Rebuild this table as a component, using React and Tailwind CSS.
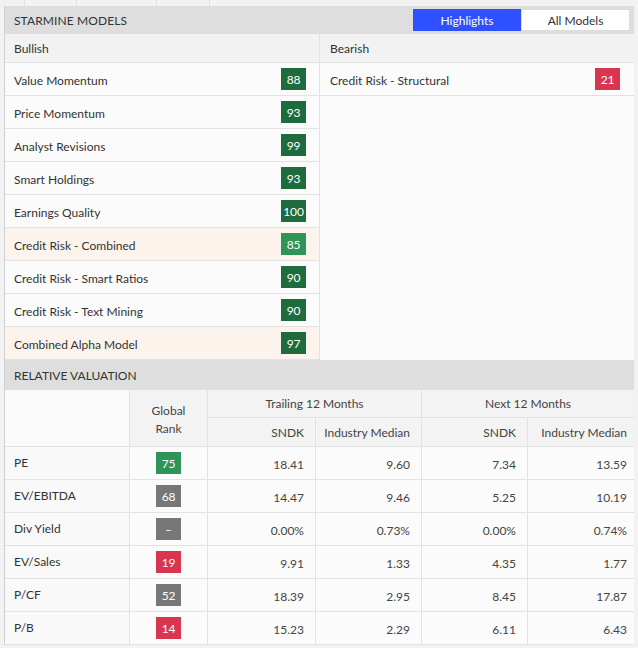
import React from "react";

const bullish = [
  { name: "Value Momentum", v: "88", c: "bg-[#1e6b3e]" },
  { name: "Price Momentum", v: "93", c: "bg-[#1e6b3e]" },
  { name: "Analyst Revisions", v: "99", c: "bg-[#1e6b3e]" },
  { name: "Smart Holdings", v: "93", c: "bg-[#1e6b3e]" },
  { name: "Earnings Quality", v: "100", c: "bg-[#1e6b3e]" },
  { name: "Credit Risk - Combined", v: "85", c: "bg-[#2e9457]", hl: true },
  { name: "Credit Risk - Smart Ratios", v: "90", c: "bg-[#1e6b3e]" },
  { name: "Credit Risk - Text Mining", v: "90", c: "bg-[#1e6b3e]" },
  { name: "Combined Alpha Model", v: "97", c: "bg-[#1e6b3e]", hl: true },
];

const vals = [
  { n: "PE", r: "75", c: "bg-[#2e9457]", a: "18.41", b: "9.60", d: "7.34", e: "13.59" },
  { n: "EV/EBITDA", r: "68", c: "bg-[#777777]", a: "14.47", b: "9.46", d: "5.25", e: "10.19" },
  { n: "Div Yield", r: "--", c: "bg-[#777777]", a: "0.00%", b: "0.73%", d: "0.00%", e: "0.74%" },
  { n: "EV/Sales", r: "19", c: "bg-[#d8354f]", a: "9.91", b: "1.33", d: "4.35", e: "1.77" },
  { n: "P/CF", r: "52", c: "bg-[#777777]", a: "18.39", b: "2.95", d: "8.45", e: "17.87" },
  { n: "P/B", r: "14", c: "bg-[#d8354f]", a: "15.23", b: "2.29", d: "6.11", e: "6.43" },
];

function Badge({ v, c }) {
  return (
    <span className={`${c} text-white text-[12px] h-[22px] w-[25px] flex items-center justify-center tracking-[-0.2px] pt-[1px]`}>
      {v === "--" ? "–" : v}
    </span>
  );
}

const num = "h-[33px] border-b border-[#e2e2e2] flex items-center justify-end pt-[3px] text-[#444]";

export default function App() {
  return (
    <div className="w-[638px] h-[648px] bg-[#f2f2f2] text-[#333] text-[12px] overflow-hidden" style={{ fontFamily: "Lato, 'Open Sans', sans-serif" }}>
      <div className="h-[6px] flex">
        <div className="w-[25px] border-r border-[#e2e2e2]" />
        <div className="w-[52px] border-r border-[#e2e2e2]" />
        <div className="w-[80px] border-r border-[#e2e2e2]" />
        <div className="w-[53px] border-r border-[#e2e2e2]" />
      </div>
      <div className="ml-[4px] w-[630px] border-l border-[#d0d0d0] bg-[#fafafa]">
        <div className="h-[28px] bg-[#dedede] flex items-center justify-between pl-[9px] pr-[4px]">
          <span className="text-[12px] tracking-[0.1px] pt-[2px]">STARMINE MODELS</span>
          <div className="flex h-[22px]">
            <div className="w-[108px] bg-[#2f50ff] text-white flex items-center justify-center pt-[1px]">Highlights</div>
            <div className="w-[109px] bg-white border border-[#dcdcdc] flex items-center justify-center pt-[1px]">All Models</div>
          </div>
        </div>
        <div className="flex">
          <div className="w-[315px] border-r border-[#e2e2e2]">
            <div className="h-[29px] bg-[#f2f2f2] border-b border-[#e2e2e2] flex items-center pl-[9px] pt-[2px]">Bullish</div>
            {bullish.map((r) => (
              <div key={r.name} className={`h-[33px] border-b border-[#e2e2e2] flex items-center justify-between pl-[9px] pr-[13px] ${r.hl ? "bg-[#fcf3ec]" : "bg-[#fbfbfb]"}`}>
                <span className="pt-[3px]">{r.name}</span>
                <Badge v={r.v} c={r.c} />
              </div>
            ))}
          </div>
          <div className="flex-1">
            <div className="h-[29px] bg-[#f2f2f2] border-b border-[#e2e2e2] flex items-center pl-[10px] pt-[2px]">Bearish</div>
            <div className="h-[33px] border-b border-[#e2e2e2] bg-[#fbfbfb] flex items-center justify-between pl-[10px] pr-[14px]">
              <span className="pt-[3px]">Credit Risk - Structural</span>
              <Badge v="21" c="bg-[#d8354f]" />
            </div>
          </div>
        </div>
        <div className="h-[30px] bg-[#dedede] flex items-center pl-[9px] pt-[2px]">RELATIVE VALUATION</div>
        <div className="grid grid-cols-[125px_78px_108px_106px_106px_1fr] bg-[#fbfbfb]">
          <div className="row-span-2 bg-[#fbfbfb] border-r border-b border-[#e2e2e2]" />
          <div className="row-span-2 bg-[#f3f3f3] border-r border-b border-[#e2e2e2] flex flex-col items-center justify-center leading-[18px] text-[#444] pt-[3px]">
            <span>Global</span>
            <span>Rank</span>
          </div>
          <div className="col-span-2 h-[28px] bg-[#f3f3f3] border-r border-b border-[#e2e2e2] flex items-center justify-center text-[#444] pt-[1px]">Trailing 12 Months</div>
          <div className="col-span-2 h-[28px] bg-[#f3f3f3] border-b border-[#e2e2e2] flex items-center justify-center text-[#444] pt-[1px]">Next 12 Months</div>
          <div className="h-[29px] bg-[#f3f3f3] border-r border-b border-[#e2e2e2] flex items-center justify-end pr-[11px] text-[#444] pt-[2px]">SNDK</div>
          <div className="h-[29px] bg-[#f3f3f3] border-r border-b border-[#e2e2e2] flex items-center justify-end pr-[11px] text-[#444] pt-[2px]">Industry Median</div>
          <div className="h-[29px] bg-[#f3f3f3] border-r border-b border-[#e2e2e2] flex items-center justify-end pr-[11px] text-[#444] pt-[2px]">SNDK</div>
          <div className="h-[29px] bg-[#f3f3f3] border-b border-[#e2e2e2] flex items-center justify-end pr-[7px] text-[#444] pt-[2px]">Industry Median</div>
          {vals.map((r) => (
            <React.Fragment key={r.n}>
              <div className="h-[33px] border-r border-b border-[#e2e2e2] bg-[#f9f9f9] pl-[9px] pt-[7px]">{r.n}</div>
              <div className="h-[33px] border-r border-b border-[#e2e2e2] flex items-center justify-center"><Badge v={r.r} c={r.c} /></div>
              <div className={`${num} border-r pr-[11px]`}>{r.a}</div>
              <div className={`${num} border-r pr-[11px]`}>{r.b}</div>
              <div className={`${num} border-r pr-[11px]`}>{r.d}</div>
              <div className={`${num} pr-[7px]`}>{r.e}</div>
            </React.Fragment>
          ))}
        </div>
      </div>
    </div>
  );
}
